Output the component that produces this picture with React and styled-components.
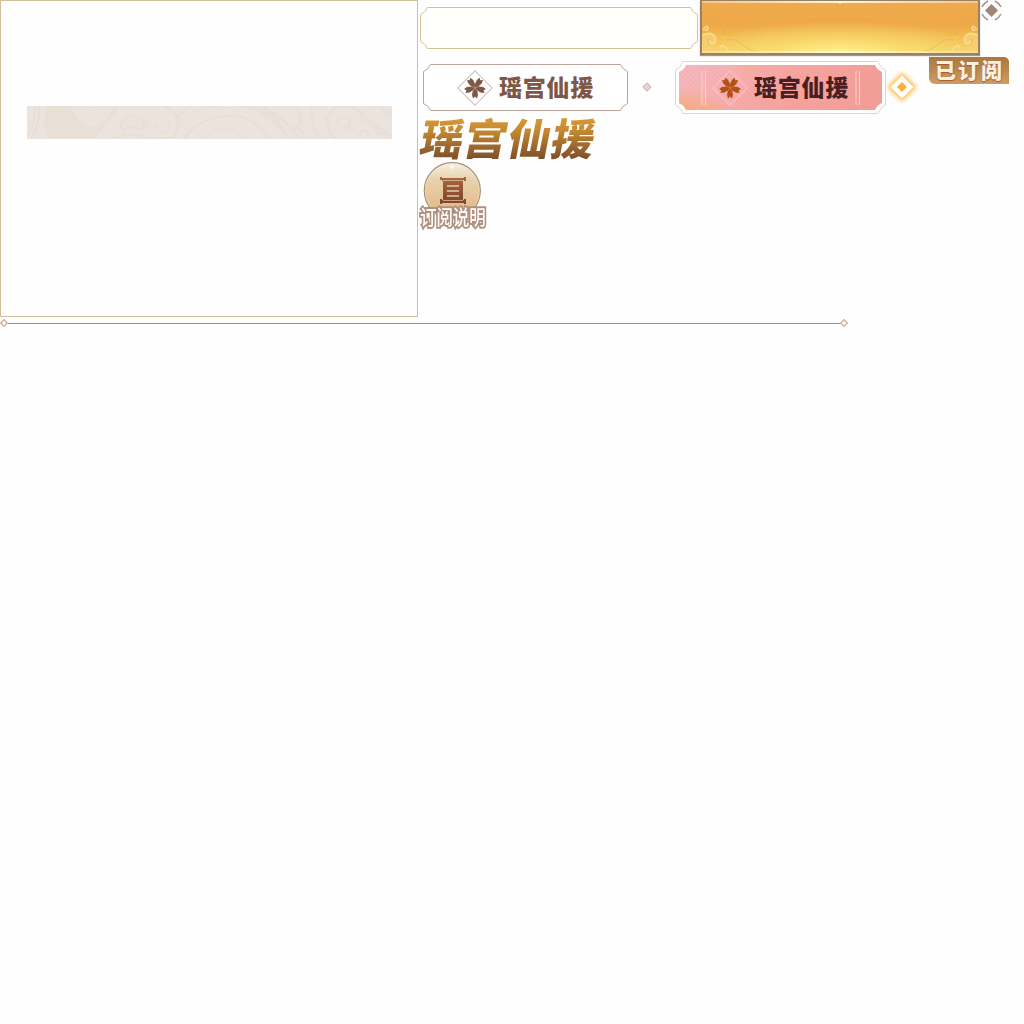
import React from "react";
import styled, { createGlobalStyle } from "styled-components";

const Global = createGlobalStyle`
  * { box-sizing: border-box; }
  body {
    margin: 0;
    background: #fefefe;
    font-family: "Noto Sans CJK SC", sans-serif;
  }
  svg { display: block; }
`;

const Page = styled.main`
  width: 1024px;
  height: 1024px;
  overflow: hidden;
`;
const Top = styled.div`
  display: flex;
  height: 317px;
`;
const Panel = styled.section`
  width: 418px;
  flex: none;
  padding: 105px 25px 0 26px;
  border: 1px solid #d4be9a;
  background: #fefefe;
`;
const CloudBand = styled.div`
  height: 33px;
  overflow: hidden;
  background: #ebe3de;
`;
const Side = styled.div`
  display: flex;
  flex-direction: column;
  flex: 1;
`;
const BannerRow = styled.div`
  display: flex;
  height: 57px;
  padding-left: 2px;
`;
const Framed = styled.div`
  position: relative;
  flex: none;
  display: flex;
  align-items: center;
  width: ${(p) => p.$w}px;
  height: ${(p) => p.$h}px;
  margin: ${(p) => p.$m || "0"};
  padding-left: ${(p) => p.$pad || 0}px;
`;
const Backdrop = styled.svg`
  position: absolute;
  inset: 0;
`;
const Banner = styled.div`
  width: 280px;
  height: 55px;
  margin-left: 2px;
  border: 2px solid #9b8068;
  border-top-width: 1px;
  box-shadow: 0 1px 1px #999;
  background:
    radial-gradient(ellipse 150px 34px at 50% 104%, #fff39a 0%, rgba(253, 232, 120, 0.6) 45%, rgba(248, 214, 95, 0) 100%),
    linear-gradient(#eeab4e 0, #eea848 42%, #efb04b 55%, #f2c056 75%, #f4d066 100%);
`;
const Ornament = styled.div`
  padding-left: 1px;
`;
const TabRow = styled.div`
  display: flex;
  height: 58px;
  padding-left: 5px;
`;
const Flower = styled.span`
  position: relative;
  flex: none;
  width: 36px;
  height: 36px;
`;
const TabLabel = styled.span`
  position: relative;
  margin: 0 0 4px 6px;
  color: ${(p) => p.$color};
  font-size: 23px;
  line-height: 30px;
  letter-spacing: 0.8px;
  font-weight: 900;
  white-space: nowrap;
`;
const Dot = styled.div`
  margin: ${(p) => p.$m};
`;
const Badge = styled.div`
  display: flex;
  justify-content: center;
  align-items: center;
  width: 80px;
  height: 27px;
  margin-left: 11px;
  padding: 0 0 3px 1px;
  border-radius: 0 5px 0 6px;
  background: linear-gradient(#a97843, #d09c5f);
  color: #f7f0e4;
  font-size: 21px;
  line-height: 24px;
  letter-spacing: 2px;
  font-weight: 900;
  text-shadow: 0 1px 1px #a65b34, 1px 0 1px #b06d43;
`;
const Title = styled.h1`
  width: 182px;
  height: 47px;
  margin: 0 0 0 1px;
  padding-left: 2px;
  background: linear-gradient(#d79835 8%, #c68a32 32%, #80502a 92%);
  background-clip: text;
  -webkit-background-clip: text;
  color: transparent;
  font-size: 43px;
  line-height: 43px;
  letter-spacing: 0.7px;
  font-weight: 900;
  white-space: nowrap;
  transform: skewX(-11deg);
`;
const HelpButton = styled.div`
  display: flex;
  flex-direction: column;
  width: 70px;
  height: 68px;
  padding-left: 5px;
`;
const HelpLabel = styled.span`
  position: relative;
  width: 84px;
  margin: -16px 0 0 -3px;
  color: #fff;
  font-size: 20px;
  line-height: 22px;
  font-weight: 500;
  white-space: nowrap;
  transform: scaleX(0.82);
  transform-origin: left;
  -webkit-text-stroke: 4px #b0907f;
  paint-order: stroke fill;
  stroke-linejoin: round;
`;
const Divider = styled.div`
  display: flex;
  align-items: center;
  width: 849px;
  height: 9px;
  margin-top: 2px;
`;
const Rule = styled.span`
  flex: 1;
  height: 1px;
  margin: 0 -1px;
  background: #a98b66;
`;

function notched(w, h, o, n) {
  const r = w - o;
  const b = h - o;
  const k = n - 2;
  return `M${o + n} ${o}H${r - n}Q${r - k} ${o + k} ${r} ${o + n}V${b - n}Q${r - k} ${b - k} ${r - n} ${b}H${o + n}Q${o + k} ${b - k} ${o} ${b - n}V${o + n}Q${o + k} ${o + k} ${o + n} ${o}Z`;
}

function Clouds() {
  return (
    <svg width="365" height="33" fill="none">
      <path d="M18 0H45Q46 7 50 11C54 21 65 23 73 20C79 14 83 7 88 0H92C89 9 81 12 77 21L67 33H20V24L16 18Q20 8 18 0Z" fill="#e8dfd5" />
      <g stroke="#e8dfd6" strokeWidth="2.6">
        <path d="M1 30Q9 18 8 0M4 33Q13 17 12 0M60 0Q65 7 72 0M95 23C91 11 111 6 116 17Q119 26 107 21Q96 18 95 33M119 20C117 6 141 7 141 20C141 32 126 26 131 18M84 33Q100 24 117 32H144Q152 27 151 14Q148 4 137 0" />
        <path d="M152 18C173 -2 204 -4 228 3Q247 13 263 33M157 33C173 8 210 6 228 17L244 33M180 33C188 20 204 19 216 33M149 14Q155 4 165 0M235 0Q259 13 273 32M226 0Q246 6 256 22" />
        <path d="M270 0C275 11 276 19 268 22Q279 26 277 33M283 0C290 10 281 17 289 25L294 33M315 0C302 2 305 9 298 13C304 20 300 30 309 33M311 18C309 9 325 10 323 19Q320 25 314 21M327 25C329 14 349 13 351 28Q362 25 363 33M332 29C335 21 344 24 340 30M321 0Q338 4 335 12Q347 16 351 22L361 26M352 0Q358 7 365 9" />
      </g>
      <g stroke="#efe8e3" strokeWidth=".8">
        <path d="M2 33Q11 16 9 0M62 2Q66 6 71 1M97 22C95 11 111 8 115 18M121 14C128 6 142 12 140 22Q133 30 129 22M154 17C175 -2 205 -3 227 6M161 33C175 10 209 6 227 19M182 33C190 20 204 19 214 33M313 20Q313 11 321 15M328 22Q337 12 349 20" />
      </g>
    </svg>
  );
}

function Scroll({ flip }) {
  return (
    <g transform={flip ? "translate(276 0) scale(-1 1)" : undefined}>
      <path d="M0 51V33Q11 29 14 37Q15 43 11 44Q7 43 9 39Q7 36 5 39Q4 46 13 46Q19 45 23 50L29 51Z" fill="#f6d27a" opacity=".7" />
      <g fill="none" stroke="#fbdf9c" strokeWidth="1.8" opacity=".75">
        <path d="M1 29Q5 23 6 27Q6 30 3 29M1 34Q10 30 13 36Q15 42 10 43Q7 42 8 39M18 47Q19 43 23 46Q24 49 28 51" />
        <path d="M21 36Q29 36 35 42T55 51" strokeWidth="1" opacity=".5" />
      </g>
      <path d="M2 15C13 18 22 24 23 34M25 38Q34 38 40 44T60 51" fill="none" stroke="#dda24b" opacity=".4" />
    </g>
  );
}

function Blossom({ active }) {
  return (
    <Flower>
      <svg width="36" height="36" viewBox="0 0 36 36">
        <path d="M18 .8L35.2 18L18 35.2L.8 18Z" fill={active ? "none" : "#fff"} stroke={active ? "#f9c2b9" : "#d5c8c3"} strokeWidth="1.2" />
        <g fill={active ? "#b35018" : "#805746"}>
          {[36, 108, 180, 252, 324].map((a) => (
            <path key={a} transform={`translate(18 17.6) rotate(${a})`} d="M0 0L-2.2 -3L-3 -7.5L-2 -10.8L0 -9L2 -10.8L3 -7.5L2.2 -3Z" />
          ))}
        </g>
        <path d="M18 18L16 21M18 18L20 21M18 18L14.5 16.5M18 18L21.5 16.5M18 18V14.5" stroke={active ? "#df784d" : "#b39a8e"} strokeWidth=".5" />
      </svg>
    </Flower>
  );
}

function EndMark() {
  return (
    <svg width="9" height="9">
      <path d="M4 .8L7.2 4L4 7.2L.8 4Z" fill="#fff" stroke="#cdb7a3" strokeWidth="1.6" />
    </svg>
  );
}

export default function App() {
  return (
    <Page>
      <Global />
      <Top>
        <Panel>
          <CloudBand><Clouds /></CloudBand>
        </Panel>
        <Side>
          <BannerRow>
            <Framed $w={278} $h={42} $m="7px 0 0">
              <Backdrop width="278" height="42">
                <path d={notched(278, 42, 0.5, 7)} fill="#fffffb" stroke="#d5c397" />
              </Backdrop>
            </Framed>
            <Banner>
              <svg width="276" height="52">
                <defs>
                  <linearGradient id="shine">
                    <stop offset="0" stopColor="#ffe6b0" stopOpacity=".5" />
                    <stop offset=".5" stopColor="#fff8d9" />
                    <stop offset="1" stopColor="#ffe6b0" stopOpacity=".5" />
                  </linearGradient>
                </defs>
                <Scroll />
                <Scroll flip />
                <rect width="276" height="2" fill="url(#shine)" />
                <path d="M134 0H142L138 3Z" fill="#fff9df" />
                <rect y="50" width="276" height="2" fill="url(#shine)" />
              </svg>
            </Banner>
            <Ornament>
              <svg width="22" height="22" fill="none">
                <path d="M10.5 4L17 10.5L10.5 17L4 10.5Z" fill="#a18678" />
                <path d="M1 7Q3 3 7 1M14 1Q18 3 20 7M1 14Q3 18 7 20M14 20Q18 18 20 14" stroke="#aa9286" strokeWidth="1.5" />
              </svg>
            </Ornament>
          </BannerRow>
          <TabRow>
            <Framed $w={205} $h={47} $m="7px 0 0" $pad={34}>
              <Backdrop width="205" height="47">
                <path d={notched(205, 47, 0.5, 7)} fill="#fff" stroke="#b9a59c" />
              </Backdrop>
              <Blossom />
              <TabLabel $color="#805746">瑶宫仙援</TabLabel>
            </Framed>
            <Dot $m="25px 0 0 14px">
              <svg width="10" height="10">
                <path d="M5 .8L9.2 5L5 9.2L.8 5Z" fill="#e6d2cf" stroke="#c5aaa5" />
              </svg>
            </Dot>
            <Framed $w={211} $h={53} $m="4px 0 0 23px" $pad={37}>
              <Backdrop width="211" height="53">
                <defs>
                  <linearGradient id="rose" x1="0" y1="0" x2="1" y2=".2">
                    <stop offset="0" stopColor="#f5bbc4" />
                    <stop offset=".25" stopColor="#f6b3b6" />
                    <stop offset=".55" stopColor="#f7a7a3" />
                    <stop offset="1" stopColor="#f39f98" />
                  </linearGradient>
                  <radialGradient id="peach">
                    <stop offset="0" stopColor="#f8ac73" />
                    <stop offset="1" stopColor="#f8ac73" stopOpacity="0" />
                  </radialGradient>
                  <pattern id="hatch" width="3.5" height="4" patternUnits="userSpaceOnUse" patternTransform="rotate(-45)">
                    <path d="M1 0V4" stroke="#e8817e" strokeWidth=".8" opacity=".3" />
                  </pattern>
                  <clipPath id="plate"><path d={notched(211, 53, 4, 7)} /></clipPath>
                </defs>
                <path d="M8 .5H203L205 4Q206 7 210.5 9V44Q206 46 205 49L203 52.5H8L6 49Q5 46 .5 44V9Q5 7 6 4Z" fill="#fff" stroke="#ddd4d5" />
                <g clipPath="url(#plate)">
                  <rect width="211" height="53" fill="url(#rose)" />
                  <ellipse cx="10" cy="45" rx="30" ry="18" fill="url(#peach)" opacity=".8" />
                  <ellipse cx="36" cy="49" rx="22" ry="9" fill="url(#peach)" opacity=".7" />
                  <ellipse cx="75" cy="4" rx="20" ry="10" fill="url(#peach)" opacity=".35" />
                  <rect width="211" height="53" fill="url(#hatch)" />
                </g>
                <path d="M27 10V44M30.5 10V44M181 10V44M184.5 10V44" stroke="#fbd0cd" />
              </Backdrop>
              <Blossom active />
              <TabLabel $color="#49201f">瑶宫仙援</TabLabel>
            </Framed>
            <Dot $m="14px 0 0">
              <svg width="32" height="32">
                <defs>
                  <filter id="glow" x="-30%" y="-30%" width="160%" height="160%">
                    <feGaussianBlur stdDeviation="2.3" />
                  </filter>
                </defs>
                <path d="M16 1.5L30.5 16L16 30.5L1.5 16Z" fill="#ffbd45" filter="url(#glow)" />
                <path d="M16 4.5L27.5 16L16 27.5L4.5 16Z" fill="#fff" />
                <path d="M16 11L21 16L16 21L11 16Z" fill="#ffae36" />
              </svg>
            </Dot>
            <Badge>已订阅</Badge>
          </TabRow>
          <Title>瑶宫仙援</Title>
          <HelpButton>
            <svg width="60" height="60">
              <defs>
                <linearGradient id="disc" x1="0" y1="0" x2="0" y2="1">
                  <stop offset="0" stopColor="#f7f0e3" />
                  <stop offset=".3" stopColor="#e7d2ad" />
                  <stop offset="1" stopColor="#e3b47c" />
                </linearGradient>
                <linearGradient id="seal" x1="0" y1="0" x2="0" y2="1">
                  <stop offset="0" stopColor="#a9683e" />
                  <stop offset="1" stopColor="#80432c" />
                </linearGradient>
              </defs>
              <circle cx="29.3" cy="28.7" r="28" fill="url(#disc)" stroke="#a58c73" strokeWidth="1.2" />
              <circle cx="29.3" cy="28.7" r="27" fill="none" stroke="#f8ead3" strokeWidth=".5" />
              <circle cx="29.3" cy="5" r="1.7" fill="#fffaf0" />
              <path d="M17 15H19V16H41V15H43V19H41V18H40V38H41V37H43V42H41V41H19V42H17V37H19V38H20V19H19V18H17Z" fill="url(#seal)" />
              <path d="M20 18.5H40M20 38.5H40" stroke="#e5c9a2" strokeWidth=".7" />
              <path d="M24 24H36M24 29H36M24 34H36" stroke="#e8cbaa" strokeWidth="1.4" />
              <path d="M24 46H34L29 54Z" fill="#a56f48" />
            </svg>
            <HelpLabel>订阅说明</HelpLabel>
          </HelpButton>
        </Side>
      </Top>
      <Divider>
        <EndMark />
        <Rule />
        <EndMark />
      </Divider>
    </Page>
  );
}
